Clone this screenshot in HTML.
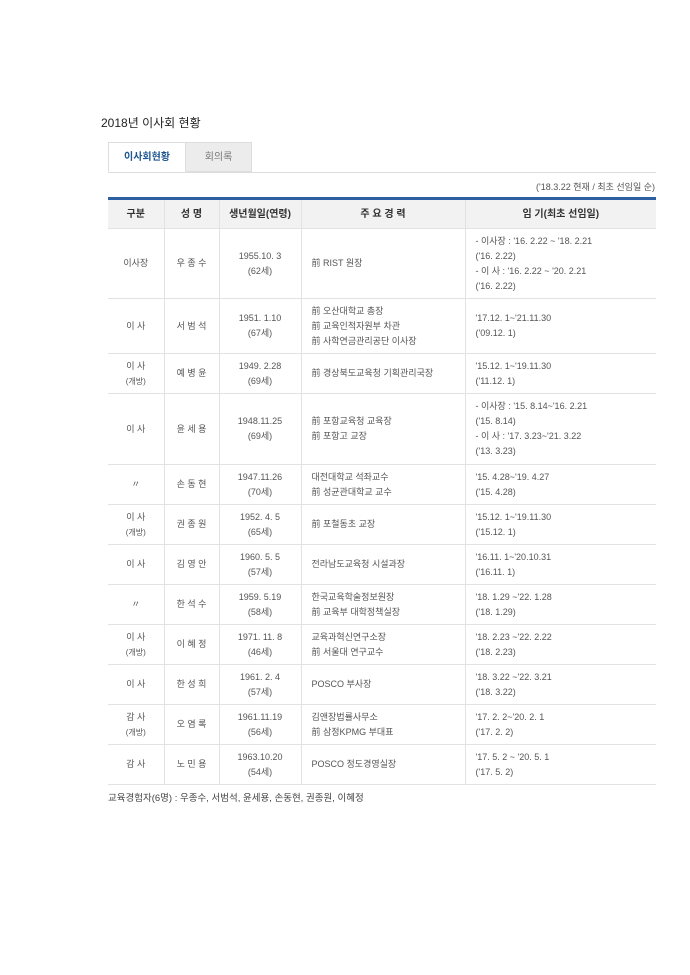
<!DOCTYPE html>
<html><head><meta charset="utf-8"><style>
body{margin:0;background:#fff;width:690px;height:975px;position:relative;font-family:"Liberation Sans","Noto Sans CJK KR",sans-serif;color:#555;}
.title{position:absolute;left:101px;top:114px;font-size:12px;color:#222;}
.tabs{position:absolute;left:108px;top:142px;width:548px;height:30px;border-bottom:1px solid #ddd;}
.t1{position:absolute;left:0;top:0;width:78px;height:30px;border:1px solid #ddd;border-bottom:1px solid #fff;background:#fff;font-size:10px;font-weight:bold;color:#1d5690;text-align:center;line-height:30px;box-sizing:border-box;}
.t2{position:absolute;left:78px;top:0;width:66px;height:30px;background:#ececec;border:1px solid #ddd;border-left:none;font-size:10px;color:#777;text-align:center;line-height:30px;box-sizing:border-box;}
.note{position:absolute;right:35px;top:180px;font-size:9px;color:#555;}
table{position:absolute;left:108px;top:197px;width:548px;border-collapse:collapse;font-size:9px;border-top:3px solid #2f5fa3;}
td,th{border:1px solid #e2e2e2;border-left:1px solid #e2e2e2;text-align:center;line-height:15px;padding:0;}
tr>*:first-child{border-left:none}tr>*:last-child{border-right:none}
th{background:#f2f2f2;font-size:10px;color:#333;height:28px;}
td.l{text-align:left;padding-left:10px;}
.s{font-size:8px;}
.foot{position:absolute;left:108px;top:790px;font-size:9.5px;color:#444;}
</style></head><body>
<div class="title">2018년 이사회 현황</div>
<div class="tabs"><div class="t1">이사회현황</div><div class="t2">회의록</div></div>
<div class="note">('18.3.22 현재 / 최초 선임일 순)</div>
<table>
<colgroup><col style="width:56px"><col style="width:55px"><col style="width:82px"><col style="width:164px"><col></colgroup>
<tr><th>구분</th><th>성 명</th><th>생년월일(연령)</th><th>주 요 경 력</th><th>임 기(최초 선임일)</th></tr>
<tr style="height:70px"><td>이사장</td><td>우 종 수</td><td>1955.10. 3<br>(62세)</td><td class="l">前 RIST 원장</td><td class="l">- 이사장 : '16. 2.22 ~ '18. 2.21<br>('16. 2.22)<br>- 이 사 : '16. 2.22 ~ '20. 2.21<br>('16. 2.22)</td></tr>
<tr style="height:55px"><td>이 사</td><td>서 범 석</td><td>1951. 1.10<br>(67세)</td><td class="l">前 오산대학교 총장<br>前 교육인적자원부 차관<br>前 사학연금관리공단 이사장</td><td class="l">'17.12. 1~'21.11.30<br>('09.12. 1)</td></tr>
<tr style="height:40px"><td>이 사<br><span class="s">(개방)</span></td><td>예 병 윤</td><td>1949. 2.28<br>(69세)</td><td class="l">前 경상북도교육청 기획관리국장</td><td class="l">'15.12. 1~'19.11.30<br>('11.12. 1)</td></tr>
<tr style="height:71px"><td>이 사</td><td>윤 세 용</td><td>1948.11.25<br>(69세)</td><td class="l">前 포항교육청 교육장<br>前 포항고 교장</td><td class="l">- 이사장 : '15. 8.14~'16. 2.21<br>('15. 8.14)<br>- 이 사 : '17. 3.23~'21. 3.22<br>('13. 3.23)</td></tr>
<tr style="height:40px"><td>〃</td><td>손 동 현</td><td>1947.11.26<br>(70세)</td><td class="l">대전대학교 석좌교수<br>前 성균관대학교 교수</td><td class="l">'15. 4.28~'19. 4.27<br>('15. 4.28)</td></tr>
<tr style="height:40px"><td>이 사<br><span class="s">(개방)</span></td><td>권 종 원</td><td>1952. 4. 5<br>(65세)</td><td class="l">前 포철동초 교장</td><td class="l">'15.12. 1~'19.11.30<br>('15.12. 1)</td></tr>
<tr style="height:40px"><td>이 사</td><td>김 영 안</td><td>1960. 5. 5<br>(57세)</td><td class="l">전라남도교육청 시설과장</td><td class="l">'16.11. 1~'20.10.31<br>('16.11. 1)</td></tr>
<tr style="height:40px"><td>〃</td><td>한 석 수</td><td>1959. 5.19<br>(58세)</td><td class="l">한국교육학술정보원장<br>前 교육부 대학정책실장</td><td class="l">'18. 1.29 ~'22. 1.28<br>('18. 1.29)</td></tr>
<tr style="height:40px"><td>이 사<br><span class="s">(개방)</span></td><td>이 혜 정</td><td>1971. 11. 8<br>(46세)</td><td class="l">교육과혁신연구소장<br>前 서울대 연구교수</td><td class="l">'18. 2.23 ~'22. 2.22<br>('18. 2.23)</td></tr>
<tr style="height:40px"><td>이 사</td><td>한 성 희</td><td>1961. 2. 4<br>(57세)</td><td class="l">POSCO 부사장</td><td class="l">'18. 3.22 ~'22. 3.21<br>('18. 3.22)</td></tr>
<tr style="height:40px"><td>감 사<br><span class="s">(개방)</span></td><td>오 염 록</td><td>1961.11.19<br>(56세)</td><td class="l">김앤장법률사무소<br>前 삼정KPMG 부대표</td><td class="l">'17. 2. 2~'20. 2. 1<br>('17. 2. 2)</td></tr>
<tr style="height:40px"><td>감 사</td><td>노 민 용</td><td>1963.10.20<br>(54세)</td><td class="l">POSCO 정도경영실장</td><td class="l">'17. 5. 2 ~ '20. 5. 1<br>('17. 5. 2)</td></tr>
</table>
<div class="foot">교육경험자(6명) : 우종수, 서범석, 윤세용, 손동현, 권종원, 이혜정</div>
</body></html>
